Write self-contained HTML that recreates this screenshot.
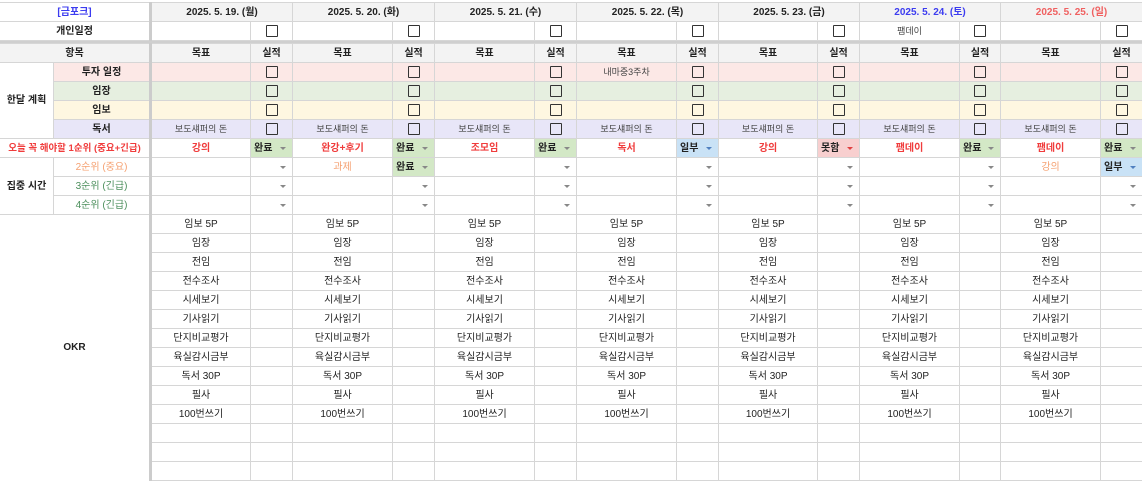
<!DOCTYPE html>
<html><head><meta charset="utf-8"><style>
*{margin:0;padding:0;box-sizing:border-box}
body{width:1142px;height:480px;overflow:hidden;background:#fff;font-family:"Liberation Sans","Noto Sans CJK KR",sans-serif;font-size:10px;color:#222}
table{border-collapse:collapse;table-layout:fixed;width:1143px;position:absolute;left:-1px;top:2px}
td{border:1px solid #d6d6d6;height:19px;text-align:center;vertical-align:middle;white-space:nowrap;overflow:hidden;padding:0;position:relative;line-height:17px}
.b{border-right:3px solid #cccccc}
.h{background:#f3f3f3;font-weight:bold}
.bd{font-weight:bold}
.pk{background:#fce8e6}.gr{background:#e6efe0}.yl{background:#fef7e1}.lv{background:#e8e6f8}
.cb{display:inline-block;width:12px;height:12px;border:1.5px solid #333;border-radius:1px;vertical-align:middle;background:transparent}
.sep td{height:3px;background:#cfcfcf;border:none;padding:0;line-height:0}
.dd{text-align:left;padding-left:3px;font-weight:bold}
.dd:after{content:"";position:absolute;right:6px;top:8px;border-left:3px solid transparent;border-right:3px solid transparent;border-top:3px solid #888}
.ok{background:#d3e8c6}.pt{background:#c9e2f6}.ng{background:#f8cfcf}
.ng:after{border-top-color:#e04040}.pt:after{border-top-color:#5080c0}
.red{color:#f03c3c;font-weight:bold}
.or{color:#f5a070}
.gt{color:#4c8f5c}
.sm{font-size:9px;color:#444}
</style></head><body>
<table>
<colgroup><col style="width:54px"><col style="width:97px"><col style="width:100px"><col style="width:42px"><col style="width:100px"><col style="width:42px"><col style="width:100px"><col style="width:42px"><col style="width:100px"><col style="width:42px"><col style="width:99px"><col style="width:42px"><col style="width:100px"><col style="width:41px"><col style="width:100px"><col style="width:42px"></colgroup>
<tr><td colspan="2" class="b bd" style="color:#3c3cf0">[금포크]</td><td colspan="2" class="h">2025. 5. 19. (월)</td><td colspan="2" class="h">2025. 5. 20. (화)</td><td colspan="2" class="h">2025. 5. 21. (수)</td><td colspan="2" class="h">2025. 5. 22. (목)</td><td colspan="2" class="h">2025. 5. 23. (금)</td><td colspan="2" class="h" style="color:#3c3cf0">2025. 5. 24. (토)</td><td colspan="2" class="h" style="color:#f06060">2025. 5. 25. (일)</td></tr>
<tr><td colspan="2" class="b bd">개인일정</td><td></td><td><span class="cb"></span></td><td></td><td><span class="cb"></span></td><td></td><td><span class="cb"></span></td><td></td><td><span class="cb"></span></td><td></td><td><span class="cb"></span></td><td class="sm">팸데이</td><td><span class="cb"></span></td><td></td><td><span class="cb"></span></td></tr>
<tr class="sep"><td colspan="16"></td></tr>
<tr class="h"><td colspan="2" class="b">항목</td><td>목표</td><td>실적</td><td>목표</td><td>실적</td><td>목표</td><td>실적</td><td>목표</td><td>실적</td><td>목표</td><td>실적</td><td>목표</td><td>실적</td><td>목표</td><td>실적</td></tr>
<tr class="pk"><td rowspan="4" class="bd" style="background:#fff">한달 계획</td><td class="b bd">투자 일정</td><td></td><td><span class="cb"></span></td><td></td><td><span class="cb"></span></td><td></td><td><span class="cb"></span></td><td class="sm">내마중3주차</td><td><span class="cb"></span></td><td></td><td><span class="cb"></span></td><td></td><td><span class="cb"></span></td><td></td><td><span class="cb"></span></td></tr>
<tr class="gr"><td class="b bd">임장</td><td></td><td><span class="cb"></span></td><td></td><td><span class="cb"></span></td><td></td><td><span class="cb"></span></td><td></td><td><span class="cb"></span></td><td></td><td><span class="cb"></span></td><td></td><td><span class="cb"></span></td><td></td><td><span class="cb"></span></td></tr>
<tr class="yl"><td class="b bd">임보</td><td></td><td><span class="cb"></span></td><td></td><td><span class="cb"></span></td><td></td><td><span class="cb"></span></td><td></td><td><span class="cb"></span></td><td></td><td><span class="cb"></span></td><td></td><td><span class="cb"></span></td><td></td><td><span class="cb"></span></td></tr>
<tr class="lv"><td class="b bd">독서</td><td class="sm">보도섀퍼의 돈</td><td><span class="cb"></span></td><td class="sm">보도섀퍼의 돈</td><td><span class="cb"></span></td><td class="sm">보도섀퍼의 돈</td><td><span class="cb"></span></td><td class="sm">보도섀퍼의 돈</td><td><span class="cb"></span></td><td class="sm">보도섀퍼의 돈</td><td><span class="cb"></span></td><td class="sm">보도섀퍼의 돈</td><td><span class="cb"></span></td><td class="sm">보도섀퍼의 돈</td><td><span class="cb"></span></td></tr>
<tr><td colspan="2" class="b red" style="font-size:9.5px">오늘 꼭 해야할 1순위 (중요+긴급)</td><td class="red">강의</td><td class="dd ok">완료</td><td class="red">완강+후기</td><td class="dd ok">완료</td><td class="red">조모임</td><td class="dd ok">완료</td><td class="red">독서</td><td class="dd pt">일부</td><td class="red">강의</td><td class="dd ng">못함</td><td class="red">팸데이</td><td class="dd ok">완료</td><td class="red">팸데이</td><td class="dd ok">완료</td></tr>
<tr><td rowspan="3" class="bd">집중 시간</td><td class="b or">2순위 (중요)</td><td></td><td class="dd"></td><td class="or">과제</td><td class="dd ok">완료</td><td></td><td class="dd"></td><td></td><td class="dd"></td><td></td><td class="dd"></td><td></td><td class="dd"></td><td class="or">강의</td><td class="dd pt">일부</td></tr>
<tr><td class="b gt">3순위 (긴급)</td><td></td><td class="dd"></td><td></td><td class="dd"></td><td></td><td class="dd"></td><td></td><td class="dd"></td><td></td><td class="dd"></td><td></td><td class="dd"></td><td></td><td class="dd"></td></tr>
<tr><td class="b gt">4순위 (긴급)</td><td></td><td class="dd"></td><td></td><td class="dd"></td><td></td><td class="dd"></td><td></td><td class="dd"></td><td></td><td class="dd"></td><td></td><td class="dd"></td><td></td><td class="dd"></td></tr>
<tr><td colspan="2" rowspan="14" class="b bd" style="border-bottom:none">OKR</td><td>임보 5P</td><td></td><td>임보 5P</td><td></td><td>임보 5P</td><td></td><td>임보 5P</td><td></td><td>임보 5P</td><td></td><td>임보 5P</td><td></td><td>임보 5P</td><td></td></tr>
<tr><td>임장</td><td></td><td>임장</td><td></td><td>임장</td><td></td><td>임장</td><td></td><td>임장</td><td></td><td>임장</td><td></td><td>임장</td><td></td></tr>
<tr><td>전임</td><td></td><td>전임</td><td></td><td>전임</td><td></td><td>전임</td><td></td><td>전임</td><td></td><td>전임</td><td></td><td>전임</td><td></td></tr>
<tr><td>전수조사</td><td></td><td>전수조사</td><td></td><td>전수조사</td><td></td><td>전수조사</td><td></td><td>전수조사</td><td></td><td>전수조사</td><td></td><td>전수조사</td><td></td></tr>
<tr><td>시세보기</td><td></td><td>시세보기</td><td></td><td>시세보기</td><td></td><td>시세보기</td><td></td><td>시세보기</td><td></td><td>시세보기</td><td></td><td>시세보기</td><td></td></tr>
<tr><td>기사읽기</td><td></td><td>기사읽기</td><td></td><td>기사읽기</td><td></td><td>기사읽기</td><td></td><td>기사읽기</td><td></td><td>기사읽기</td><td></td><td>기사읽기</td><td></td></tr>
<tr><td>단지비교평가</td><td></td><td>단지비교평가</td><td></td><td>단지비교평가</td><td></td><td>단지비교평가</td><td></td><td>단지비교평가</td><td></td><td>단지비교평가</td><td></td><td>단지비교평가</td><td></td></tr>
<tr><td>육실감시금부</td><td></td><td>육실감시금부</td><td></td><td>육실감시금부</td><td></td><td>육실감시금부</td><td></td><td>육실감시금부</td><td></td><td>육실감시금부</td><td></td><td>육실감시금부</td><td></td></tr>
<tr><td>독서 30P</td><td></td><td>독서 30P</td><td></td><td>독서 30P</td><td></td><td>독서 30P</td><td></td><td>독서 30P</td><td></td><td>독서 30P</td><td></td><td>독서 30P</td><td></td></tr>
<tr><td>필사</td><td></td><td>필사</td><td></td><td>필사</td><td></td><td>필사</td><td></td><td>필사</td><td></td><td>필사</td><td></td><td>필사</td><td></td></tr>
<tr><td>100번쓰기</td><td></td><td>100번쓰기</td><td></td><td>100번쓰기</td><td></td><td>100번쓰기</td><td></td><td>100번쓰기</td><td></td><td>100번쓰기</td><td></td><td>100번쓰기</td><td></td></tr>
<tr><td></td><td></td><td></td><td></td><td></td><td></td><td></td><td></td><td></td><td></td><td></td><td></td><td></td><td></td></tr>
<tr><td></td><td></td><td></td><td></td><td></td><td></td><td></td><td></td><td></td><td></td><td></td><td></td><td></td><td></td></tr>
<tr><td></td><td></td><td></td><td></td><td></td><td></td><td></td><td></td><td></td><td></td><td></td><td></td><td></td><td></td></tr>
</table>
</body></html>
